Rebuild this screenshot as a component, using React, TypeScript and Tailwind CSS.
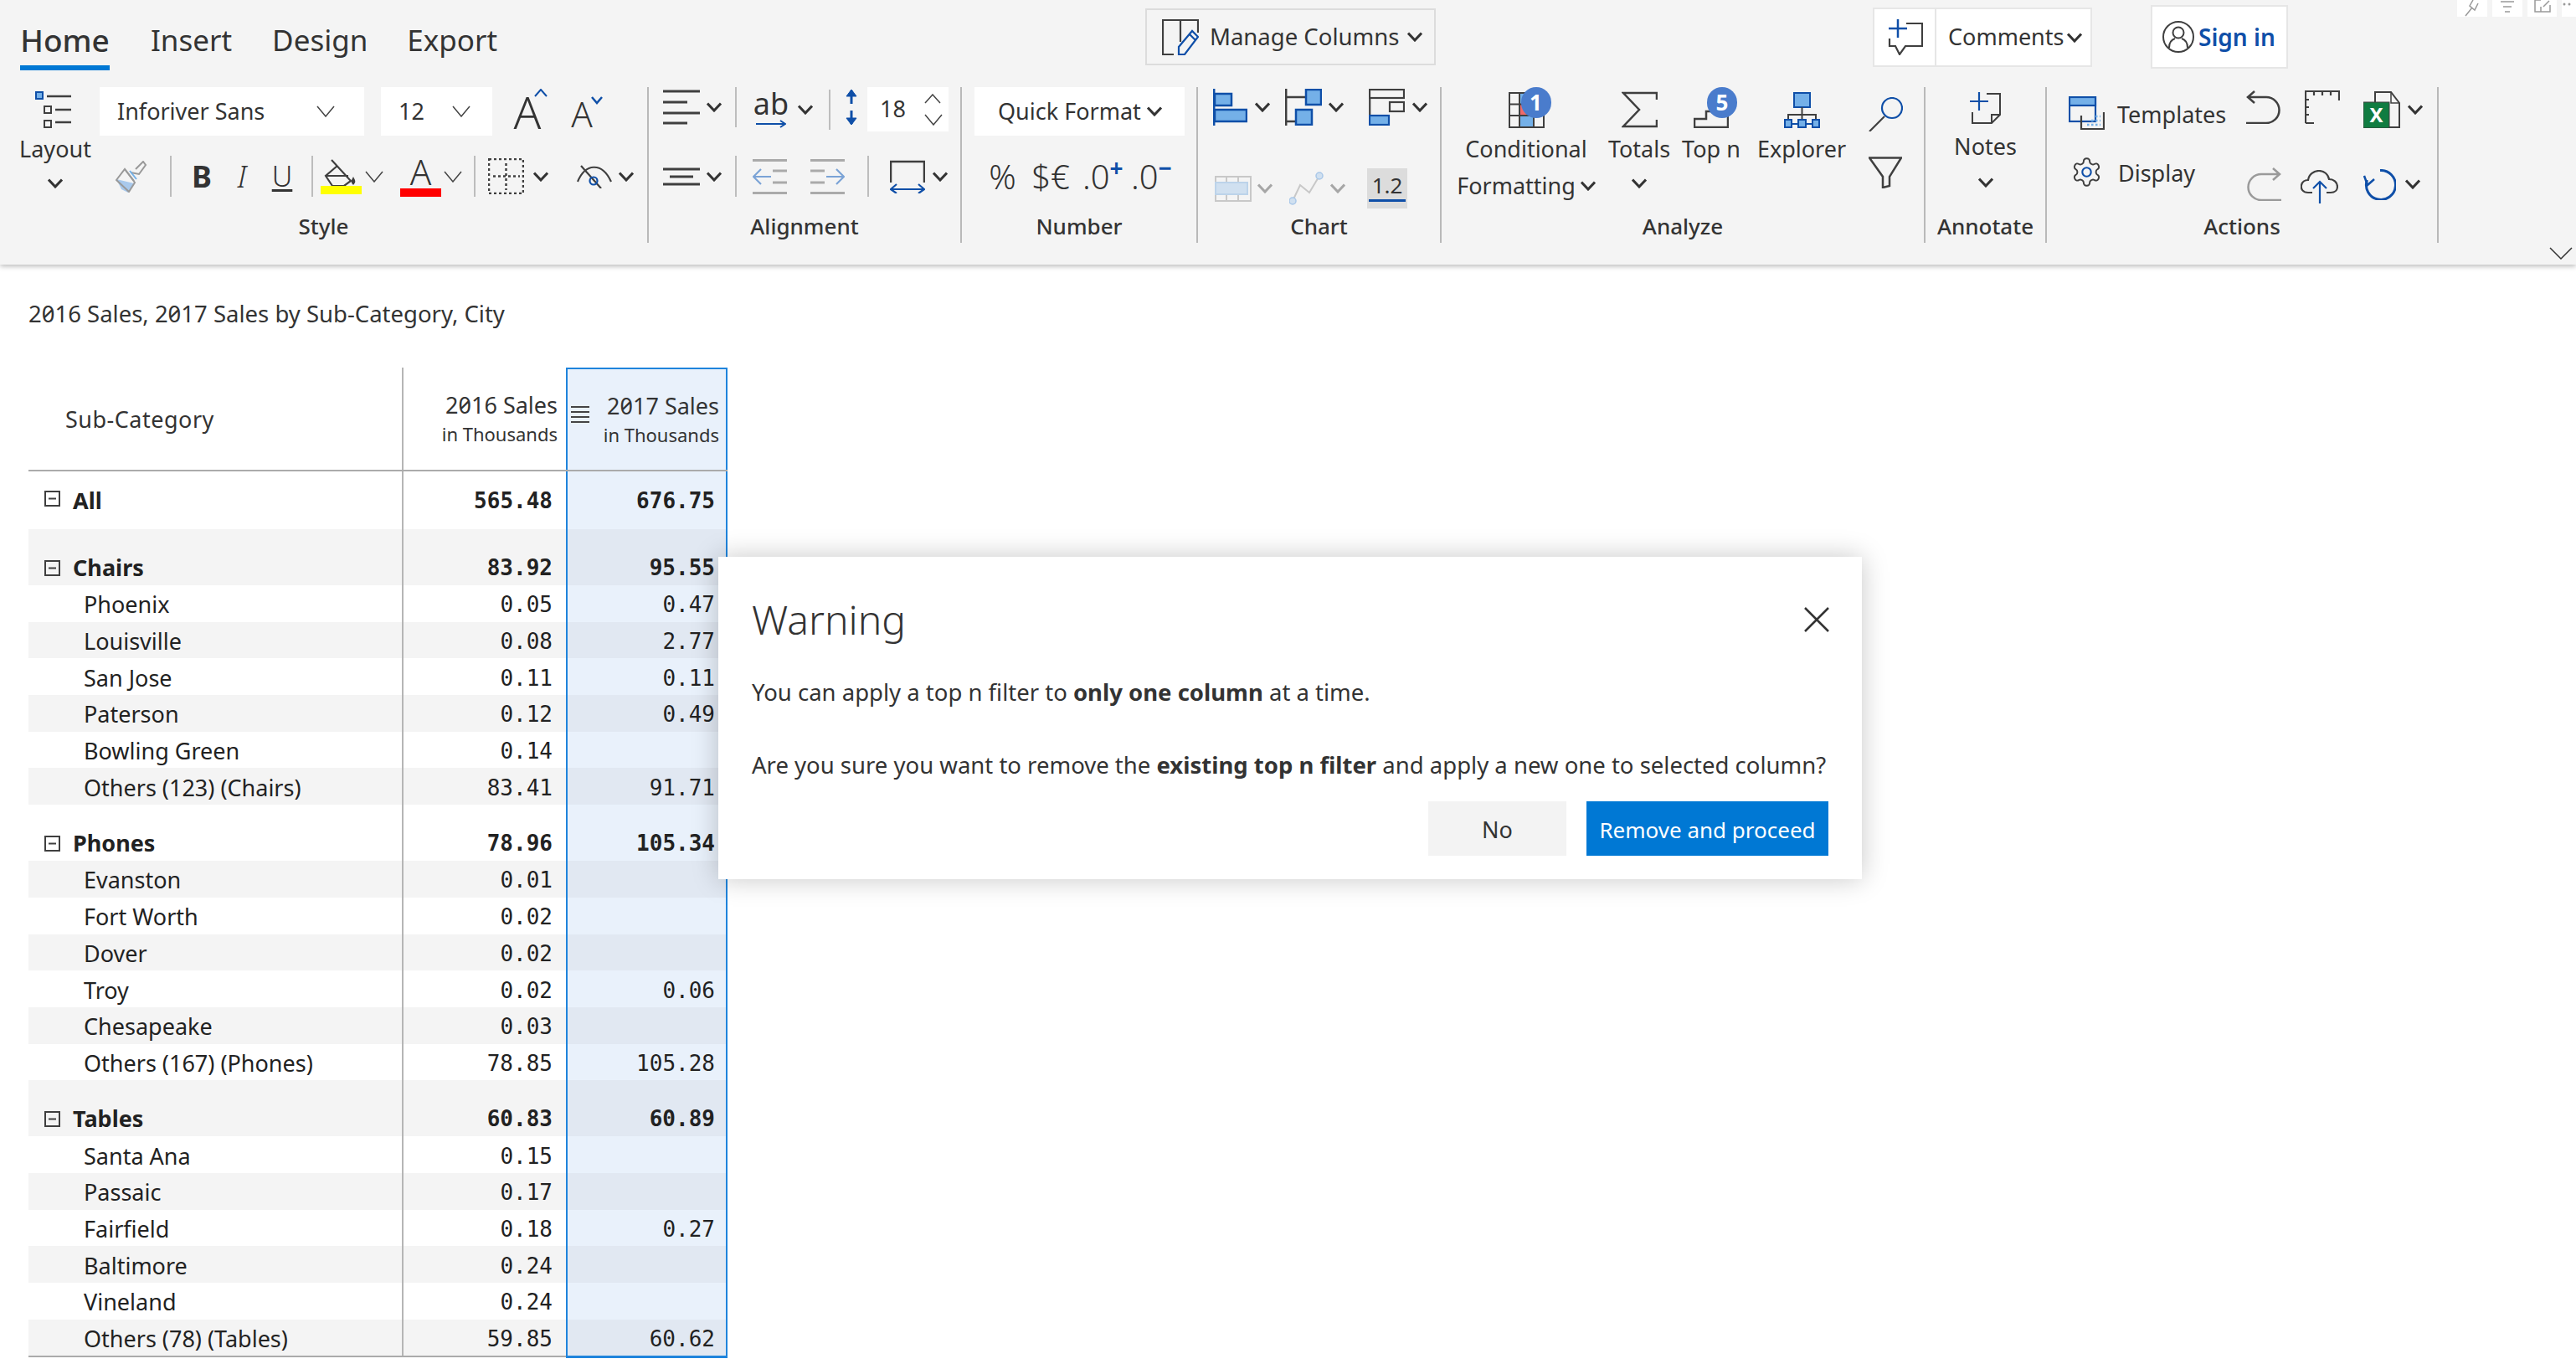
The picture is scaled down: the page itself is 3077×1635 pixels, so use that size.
import React from 'react';

const D = '#3f3f3f';
const B = '#0f4fa8';
const L = '#74b0e8';

function ChevBold({ className = '' }: { className?: string }) {
  return (
    <svg width="18" height="12" viewBox="0 0 18 12" className={`shrink-0 ${className}`} fill="none" stroke="#333" strokeWidth="3">
      <path d="M1 1.5 L9 10 L17 1.5" />
    </svg>
  );
}

function ChevThin({ className = '' }: { className?: string }) {
  return (
    <svg width="22" height="14" viewBox="0 0 22 14" className={`shrink-0 ${className}`} fill="none" stroke="#444" strokeWidth="1.5">
      <path d="M1 1 L11 13 L21 1" />
    </svg>
  );
}

function Divider({ className = '' }: { className?: string }) {
  return <div className={`w-[2px] h-[49px] bg-[#bdbdbd] shrink-0 ${className}`} />;
}

function LayoutIcon() {
  return (
    <svg width="44" height="44" viewBox="0 0 44 44" fill="none">
      <rect x="1" y="1" width="8" height="8" fill={L} stroke={B} strokeWidth="2" />
      <path d="M14 6 H43 M24 22 H43 M24 37 H43" stroke={D} strokeWidth="2.5" />
      <rect x="11" y="18" width="8" height="8" stroke={D} strokeWidth="2" />
      <rect x="11" y="35" width="8" height="8" stroke={D} strokeWidth="2" />
    </svg>
  );
}

function BrushIcon() {
  return (
    <svg width="39" height="38" viewBox="0 0 39 38" fill="none" className="shrink-0">
      <path d="M1 22 L7 34 L15 38 L22 27 Z" fill="#a9c9ec" />
      <path d="M1 23 L16 37 L23 26 L11 10 Z" stroke="#999" strokeWidth="2" />
      <path d="M11 10 L22 24 M18 14 L28 16 L36 5 L33 1 L24 10" stroke="#999" strokeWidth="2" />
      <path d="M17 12 L25 22" stroke={L} strokeWidth="2" />
    </svg>
  );
}

function FillIcon() {
  return (
    <svg width="49" height="42" viewBox="0 0 49 42" fill="none" className="shrink-0">
      <path d="M13 1 L36 26 L28 32 H14 L6 20 L20 8" stroke={D} strokeWidth="2.2" />
      <path d="M6 20 H33" stroke={D} strokeWidth="2" />
      <path d="M39 21 C37 25 35 27 39 31 C43 27 41 25 39 21 Z" fill={D} />
      <rect x="0" y="32" width="49" height="10" fill="#ffff00" />
    </svg>
  );
}

function DashGridIcon() {
  return (
    <svg width="43" height="43" viewBox="0 0 43 43" fill="none" stroke={D} strokeWidth="2.5" strokeDasharray="3 3" className="shrink-0">
      <rect x="1" y="1" width="41" height="41" />
      <path d="M21.5 6 V38 M6 21.5 H38" />
    </svg>
  );
}

function EyeIcon() {
  return (
    <svg width="42" height="28" viewBox="0 0 42 28" fill="none" className="shrink-0">
      <path d="M1 20 C10 -2 30 -4 41 20" stroke={D} strokeWidth="2.2" />
      <path d="M5 1 L29 28" stroke={D} strokeWidth="2.2" />
      <circle cx="20" cy="19" r="4.5" stroke={B} strokeWidth="2.2" />
    </svg>
  );
}

function AlignIcon() {
  return (
    <svg width="44" height="42" viewBox="0 0 44 42" stroke={D} strokeWidth="3" className="shrink-0 mb-[5px]">
      <path d="M0 2 H44 M0 15 H29 M0 28 H44 M0 40 H29" />
    </svg>
  );
}

function CenterLinesIcon() {
  return (
    <svg width="44" height="22" viewBox="0 0 44 22" stroke={D} strokeWidth="3" className="shrink-0">
      <path d="M0 2 H44 M8 11 H36 M0 20 H44" />
    </svg>
  );
}

function IndentIcon({ flip = false }: { flip?: boolean }) {
  return (
    <svg width="41" height="42" viewBox="0 0 41 42" fill="none" className="shrink-0">
      <g transform={flip ? 'translate(41 0) scale(-1 1)' : undefined}>
        <path d="M0 1.5 H41 M0 40.5 H41 M24 14 H41 M24 28 H41" stroke="#aaa" strokeWidth="3" />
        <path d="M1 21 H22 M10 12 L1 21 L10 30" stroke="#7ba3d6" strokeWidth="2.2" />
      </g>
    </svg>
  );
}

function BoxWidthIcon() {
  return (
    <svg width="42" height="40" viewBox="0 0 42 40" fill="none" className="shrink-0">
      <path d="M1 27 V2 H41 V27" stroke={D} strokeWidth="2.5" />
      <path d="M1 35 H41 M8 29 L1 35 L8 40 M34 29 L41 35 L34 40" stroke={B} strokeWidth="2.2" />
    </svg>
  );
}

function UpDownIcon() {
  return (
    <svg width="16" height="44" viewBox="0 0 16 44" fill="none" stroke={B} className="shrink-0 mb-[5px]">
      <path d="M8 2 V18 M8 26 V42" strokeWidth="3" />
      <path d="M2 9 L8 1 L14 9 Z M2 35 L8 43 L14 35 Z" fill={B} strokeWidth="1" />
    </svg>
  );
}

function BarIcon() {
  return (
    <svg width="41" height="44" viewBox="0 0 41 44" className="shrink-0" fill={L} stroke={B} strokeWidth="2.5">
      <path d="M1.2 0 V44" />
      <rect x="2" y="6" width="20" height="14" />
      <rect x="2" y="25" width="38" height="14" />
    </svg>
  );
}

function Bar2Icon() {
  return (
    <svg width="44" height="44" viewBox="0 0 44 44" className="shrink-0" fill="none">
      <path d="M1.2 0 V44 M1 10 H25 M1 39 H13" stroke={D} strokeWidth="2.5" />
      <rect x="25" y="1" width="18" height="18" fill={L} stroke={B} strokeWidth="2.5" />
      <rect x="13" y="25" width="19" height="18" fill={L} stroke={B} strokeWidth="2.5" />
    </svg>
  );
}

function Bar3Icon() {
  return (
    <svg width="43" height="44" viewBox="0 0 43 44" className="shrink-0" fill="none">
      <rect x="1" y="1" width="41" height="10" stroke={D} strokeWidth="2.2" />
      <rect x="25" y="16" width="17" height="11" stroke={D} strokeWidth="2.2" />
      <path d="M1.2 11 V32" stroke={D} strokeWidth="2.2" />
      <rect x="1" y="32" width="23" height="11" fill={L} stroke={B} strokeWidth="2.2" />
    </svg>
  );
}

function DisabledTableIcon() {
  return (
    <svg width="44" height="31" viewBox="0 0 44 31" className="shrink-0" fill="none" stroke="#c8c8c8" strokeWidth="2">
      <rect x="1" y="1" width="42" height="29" />
      <path d="M14 1 V8 M28 1 V8 M14 22 V30 M28 22 V30" />
      <rect x="1" y="8" width="38" height="14" fill="#d0e0f0" stroke="#bcd3ea" />
    </svg>
  );
}

function DisabledLineIcon() {
  return (
    <svg width="41" height="40" viewBox="0 0 41 40" className="shrink-0" fill="none">
      <path d="M4 35 L13 16 L24 25 L36 5" stroke="#c8c8c8" strokeWidth="2" />
      <circle cx="4" cy="35" r="4" fill="#d0e0f0" stroke="#a9c7e8" strokeWidth="1.5" />
      <circle cx="36" cy="5" r="4" fill="#d0e0f0" stroke="#a9c7e8" strokeWidth="1.5" />
    </svg>
  );
}

function CondIcon() {
  return (
    <svg width="43" height="43" viewBox="0 0 43 43" fill="none">
      <rect x="13" y="1" width="17" height="13" fill={L} />
      <rect x="13" y="15" width="17" height="13" fill="#ef6a6a" />
      <rect x="13" y="28" width="17" height="14" fill={L} stroke={B} strokeWidth="2" />
      <path d="M1 1 H42 V42 H1 Z M13 1 V42 M30 1 V42 M1 14.5 H42 M1 28 H42" stroke={D} strokeWidth="2" />
    </svg>
  );
}

function SigmaIcon() {
  return (
    <svg width="43" height="44" viewBox="0 0 43 44" fill="none" stroke={D} strokeWidth="2.5">
      <path d="M42 10 V2 H2 L21 22 L2 42 H42 V34" />
    </svg>
  );
}

function StairsIcon() {
  return (
    <svg width="42" height="43" viewBox="0 0 42 43" fill="none" stroke={D} strokeWidth="2.5">
      <path d="M1 42 V32 H15 V23 H41 V42 Z" />
    </svg>
  );
}

function ExplorerIcon() {
  return (
    <svg width="43" height="43" viewBox="0 0 43 43" fill="none">
      <rect x="12" y="1" width="19" height="17" fill={L} stroke={B} strokeWidth="2" />
      <path d="M21.5 18 V34 M5 34 V27 H38 V34" stroke={D} strokeWidth="2" />
      <path d="M9 38 H17 M26 38 H34" stroke={B} strokeWidth="2" />
      <rect x="1" y="33" width="8" height="9" fill={L} stroke={B} strokeWidth="2" />
      <rect x="17" y="33" width="9" height="9" fill={L} stroke={B} strokeWidth="2" />
      <rect x="34" y="33" width="8" height="9" fill={L} stroke={B} strokeWidth="2" />
    </svg>
  );
}

function SearchIcon() {
  return (
    <svg width="41" height="41" viewBox="0 0 41 41" fill="none">
      <circle cx="28" cy="13" r="12" stroke={B} strokeWidth="2.2" />
      <path d="M19 23 L1 41" stroke={D} strokeWidth="2.2" />
    </svg>
  );
}

function FunnelIcon() {
  return (
    <svg width="40" height="38" viewBox="0 0 40 38" fill="none" stroke={D} strokeWidth="2.5">
      <path d="M1 1.5 H39 L25 24 V35 L17 37 V24 Z" />
    </svg>
  );
}

function NoteIcon() {
  return (
    <svg width="37" height="39" viewBox="0 0 37 39" fill="none">
      <path d="M20 3 H36 V28 L26 38 H3 V25 M36 28 H26 V38" stroke={D} strokeWidth="2" />
      <path d="M11 1 V23 M0 12 H22" stroke={B} strokeWidth="2.2" />
    </svg>
  );
}

function CommentIcon() {
  return (
    <svg width="42" height="43" viewBox="0 0 42 43" fill="none" className="shrink-0">
      <path d="M22 5 H41 V32 H21 L14 42 L9 32 H2 V23" stroke={D} strokeWidth="2.2" />
      <path d="M12 0 V22 M1 11 H23" stroke={B} strokeWidth="2.5" />
    </svg>
  );
}

function ManageIcon() {
  return (
    <svg width="44" height="43" viewBox="0 0 44 43" fill="none" className="shrink-0">
      <path d="M14 42 H1 V1 H43 V16 M22 1 V27" stroke={D} strokeWidth="2.2" />
      <path d="M20 42 V33 L36 14 L43 21 L27 42 Z M33 18 L40 25" stroke={B} strokeWidth="2.2" fill="#f4f4f4" />
    </svg>
  );
}

function UserIcon() {
  return (
    <svg width="38" height="38" viewBox="0 0 38 38" fill="none" stroke={D} strokeWidth="2" className="shrink-0">
      <circle cx="19" cy="19" r="18" />
      <circle cx="19" cy="14" r="6.5" />
      <path d="M8 32 C8 25 12 22 15 21 M30 32 C30 25 26 22 23 21" />
    </svg>
  );
}

function TemplatesIcon() {
  return (
    <svg width="43" height="40" viewBox="0 0 43 40" fill="none" className="shrink-0">
      <rect x="1" y="1" width="31" height="29" stroke={B} strokeWidth="2.2" />
      <rect x="1" y="1" width="31" height="10" fill={L} stroke={B} strokeWidth="2.2" />
      <path d="M15 23 V39 H42 V19" stroke={D} strokeWidth="2.2" />
      <path d="M22 34 H38 M27 29 H38 M32 24 H38" stroke={L} strokeWidth="2.5" strokeDasharray="2.5 2.5" />
    </svg>
  );
}

function GearIcon() {
  return (
    <svg width="39" height="39" viewBox="0 0 24 24" fill="none" className="shrink-0">
      <path
        d="M12.22 2h-.44a2 2 0 0 0-2 2v.18a2 2 0 0 1-1 1.73l-.43.25a2 2 0 0 1-2 0l-.15-.08a2 2 0 0 0-2.73.73l-.22.38a2 2 0 0 0 .73 2.73l.15.1a2 2 0 0 1 1 1.72v.51a2 2 0 0 1-1 1.74l-.15.09a2 2 0 0 0-.73 2.73l.22.38a2 2 0 0 0 2.73.73l.15-.08a2 2 0 0 1 2 0l.43.25a2 2 0 0 1 1 1.73V20a2 2 0 0 0 2 2h.44a2 2 0 0 0 2-2v-.18a2 2 0 0 1 1-1.73l.43-.25a2 2 0 0 1 2 0l.15.08a2 2 0 0 0 2.73-.73l.22-.39a2 2 0 0 0-.73-2.73l-.15-.08a2 2 0 0 1-1-1.74v-.5a2 2 0 0 1 1-1.74l.15-.09a2 2 0 0 0 .73-2.73l-.22-.38a2 2 0 0 0-2.73-.73l-.15.08a2 2 0 0 1-2 0l-.43-.25a2 2 0 0 1-1-1.73V4a2 2 0 0 0-2-2z"
        stroke={D}
        strokeWidth="1.2"
      />
      <circle cx="12" cy="12" r="3.2" stroke={B} strokeWidth="1.3" />
    </svg>
  );
}

function UndoIcon() {
  return (
    <svg width="42" height="40" viewBox="0 0 42 40" fill="none" stroke={D} strokeWidth="2.5" className="shrink-0">
      <path d="M3 8 H24 A15.5 15.5 0 0 1 24 39 H0 M10 1 L2 8 L10 15" />
    </svg>
  );
}

function RedoIcon() {
  return (
    <svg width="41" height="40" viewBox="0 0 41 40" fill="none" stroke="#9a9a9a" strokeWidth="2.5" className="shrink-0">
      <path d="M38 8 H17 A15.5 15.5 0 0 0 17 39 H41 M31 1 L39 8 L31 15" />
    </svg>
  );
}

function RulerIcon() {
  return (
    <svg width="42" height="40" viewBox="0 0 42 40" fill="none" stroke={D} strokeWidth="2.2" className="shrink-0">
      <path d="M1 39 V1 H41 V12 M1 39 H11 M11 1 V6 M21 1 V6 M31 1 V6 M1 11 H5 M1 20 H5 M1 29 H5" />
    </svg>
  );
}

function ExcelIcon() {
  return (
    <svg width="44" height="44" viewBox="0 0 44 44" className="shrink-0">
      <path d="M14 13 V1 H33 L43 14 V43 H30" fill="#f4f4f4" stroke={D} strokeWidth="2" />
      <path d="M33 1 V14 H43" fill="none" stroke={D} strokeWidth="1.5" />
      <rect x="0" y="13" width="31" height="31" fill="#107c41" stroke={D} strokeWidth="1" />
      <text x="15.5" y="37" textAnchor="middle" fontSize="24" fontWeight="700" fill="#fff" fontFamily="Noto Sans">X</text>
    </svg>
  );
}

function CloudIcon() {
  return (
    <svg width="45" height="40" viewBox="0 0 45 40" fill="none" className="shrink-0">
      <path d="M14 27 H9 C3 27 0 23 1 18 C2 14 5 12 9 12 C10 5 16 1 22 1 C28 1 33 5 34 11 C40 11 44 15 44 20 C44 24 41 27 36 27 H31" stroke={D} strokeWidth="2.2" />
      <path d="M23 40 V14 M15 22 L23 14 L31 22" stroke={B} strokeWidth="2.2" />
    </svg>
  );
}

function RefreshIcon() {
  return (
    <svg width="39" height="37" viewBox="0 0 39 37" fill="none" stroke={B} strokeWidth="3" className="shrink-0">
      <path d="M20 1.5 A17.5 17.5 0 1 1 4.5 13" />
      <path d="M1 8 L5 19 L13 12" strokeWidth="2.5" />
    </svg>
  );
}

function Group({ label, width, children }: { label: string; width: string; children: React.ReactNode }) {
  return (
    <div className={`${width} h-[186px] shrink-0 flex flex-col border-r-2 border-[#b9b9b9]`}>
      <div className="h-[148px]">{children}</div>
      <div className="h-[38px] text-center text-[26px] leading-[36px] font-medium text-[#333]">{label}</div>
    </div>
  );
}

function HostIcons() {
  return (
    <div className="absolute right-0 top-0 flex gap-[6px]">
      <div className="w-[36px] h-[20px] bg-white flex justify-center">
        <svg width="20" height="20" viewBox="0 0 20 20" fill="none" stroke="#999" strokeWidth="1.5">
          <path d="M11 0 L7 7 L13 12 L17 4 M10 9 L2 19" />
        </svg>
      </div>
      <div className="w-[36px] h-[20px] bg-white flex justify-center">
        <svg width="16" height="20" viewBox="0 0 16 20" stroke="#999" strokeWidth="1.5">
          <path d="M0 2 H16 M3 8 H13 M5 14 H11" />
        </svg>
      </div>
      <div className="w-[35px] h-[20px] bg-white flex justify-center">
        <svg width="20" height="20" viewBox="0 0 20 20" fill="none" stroke="#999" strokeWidth="1.5">
          <path d="M8 0 H1 V14 H19 V6 M8 8 V14 M11 8 L18 1" />
        </svg>
      </div>
      <div className="w-[17px] h-[20px] bg-white flex">
        <svg width="12" height="20" viewBox="0 0 12 20" fill="#999">
          <circle cx="3" cy="5" r="1.5" />
          <circle cx="9" cy="5" r="1.5" />
        </svg>
      </div>
    </div>
  );
}

function Ribbon() {
  return (
    <div className="relative h-[316px] bg-[#f4f4f4] shadow-[0_2px_6px_rgba(0,0,0,0.28)] text-[#333] text-[27px]">
      <div className="h-[104px] flex items-start">
        <div className="w-[1368px] shrink-0 flex items-start pt-[18px] pl-[24px] text-[35px] leading-[60px]">
          <div className="w-[107px] h-[66px] border-b-[6px] border-[#0078d4] text-[37px] font-medium text-center">Home</div>
          <div className="ml-[49px]">Insert</div>
          <div className="ml-[48px]">Design</div>
          <div className="ml-[47px]">Export</div>
        </div>
        <div className="mt-[10px] w-[347px] h-[68px] border-2 border-[#dcdcdc] flex items-center pl-[18px]">
          <ManageIcon />
          <span className="ml-[13px] whitespace-nowrap w-[228px] text-[27.5px]">Manage Columns</span>
          <ChevBold className="ml-[8px]" />
        </div>
        <div className="ml-[522px] mt-[9px] w-[262px] h-[71px] bg-white border-2 border-[#e6e6e6] flex items-center">
          <div className="w-[74px] h-full border-r-2 border-[#e6e6e6] flex items-center pl-[16px]"><CommentIcon /></div>
          <span className="ml-[14px] w-[140px] whitespace-nowrap">Comments</span>
          <ChevBold className="ml-[2px]" />
        </div>
        <div className="ml-[70px] mt-[6px] w-[164px] h-[76px] bg-white border-2 border-[#e6e6e6] flex items-center pl-[12px]">
          <UserIcon />
          <span className="ml-[5px] text-[#0f4fa8] font-semibold text-[28px] whitespace-nowrap">Sign in</span>
        </div>
      </div>

      <div className="flex items-start">
        <Group label="Style" width="w-[775px]">
          <div className="flex">
            <div className="w-[132px] -mr-[14px] shrink-0 flex flex-col items-center">
              <div className="mt-[5px] -ml-[4px]"><LayoutIcon /></div>
              <div className="mt-[3px] leading-[44px]">Layout</div>
              <ChevBold className="mt-[13px]" />
            </div>
            <div className="flex flex-col">
              <div className="h-[58px] flex">
                <div className="ml-[1px] w-[316px] bg-white flex items-center pl-[21px]">
                  <span className="w-[238px] whitespace-nowrap">Inforiver Sans</span>
                  <ChevThin />
                </div>
                <div className="ml-[20px] w-[133px] bg-white flex items-center pl-[21px]">
                  <span className="w-[64px]">12</span>
                  <ChevThin />
                </div>
                <div className="relative ml-[24px] w-[36px] text-[54px] leading-[58px] font-light text-center">
                  A
                  <svg width="16" height="10" viewBox="0 0 16 10" fill="none" stroke={B} strokeWidth="2" className="absolute left-[26px] top-[2px]"><path d="M1 9 L8 1 L15 9" /></svg>
                </div>
                <div className="relative ml-[33px] w-[28px] text-[42px] leading-[64px] font-light text-center">
                  A
                  <svg width="14" height="10" viewBox="0 0 14 10" fill="none" stroke={B} strokeWidth="2.5" className="absolute left-[25px] top-[11px]"><path d="M1 1 L7 8 L13 1" /></svg>
                </div>
              </div>
              <div className="mt-[24px] h-[49px] flex items-center">
                <div className="ml-[20px]"><BrushIcon /></div>
                <Divider className="ml-[26px]" />
                <span className="ml-[20px] w-[32px] text-center text-[36px] font-bold">B</span>
                <span className="ml-[16px] w-[32px] text-center text-[36px] font-light italic">I</span>
                <span className="ml-[16px] w-[32px] text-center text-[34px] underline underline-offset-[3px] font-light">U</span>
                <Divider className="ml-[19px]" />
                <div className="ml-[9px]"><FillIcon /></div>
                <ChevThin className="ml-[4px]" />
                <div className="ml-[20px] w-[49px] h-[49px] flex flex-col items-center justify-end">
                  <span className="text-[42px] leading-[40px] font-light">A</span>
                  <div className="w-[49px] h-[10px] bg-[#ff0000] shrink-0" />
                </div>
                <ChevThin className="ml-[3px]" />
                <Divider className="ml-[14px]" />
                <div className="ml-[15px]"><DashGridIcon /></div>
                <ChevBold className="ml-[11px]" />
                <div className="ml-[34px]"><EyeIcon /></div>
                <ChevBold className="ml-[8px]" />
              </div>
            </div>
          </div>
        </Group>

        <Group label="Alignment" width="w-[374px]">
          <div className="h-[53px] flex items-center">
            <div className="ml-[17px]"><AlignIcon /></div>
            <ChevBold className="ml-[8px] mb-[5px]" />
            <div className="ml-[16px] w-[2px] h-[48px] bg-[#bdbdbd] mb-[5px]" />
            <div className="ml-[23px] w-[36px] flex flex-col items-center mb-[3px]">
              <span className="text-[36px] leading-[38px]">ab</span>
              <svg width="36" height="10" viewBox="0 0 36 10" fill="none" stroke={B} strokeWidth="2"><path d="M0 5 H34 M29 1 L35 5 L29 9" /></svg>
            </div>
            <ChevBold className="ml-[14px]" />
            <div className="ml-[19px] w-[2px] h-[48px] bg-[#bdbdbd]" />
            <div className="ml-[17px]"><UpDownIcon /></div>
            <div className="ml-[11px] w-[97px] h-[53px] bg-white flex items-center pl-[15px]">
              <span className="w-[53px]">18</span>
              <div className="flex flex-col gap-[12px]">
                <svg width="20" height="12" viewBox="0 0 20 12" fill="none" stroke="#444" strokeWidth="1.5"><path d="M1 11 L10 1 L19 11" /></svg>
                <ChevThin />
              </div>
            </div>
          </div>
          <div className="mt-[29px] h-[49px] flex items-center">
            <div className="ml-[17px]"><CenterLinesIcon /></div>
            <ChevBold className="ml-[8px]" />
            <Divider className="ml-[16px]" />
            <div className="ml-[19px]"><IndentIcon /></div>
            <div className="ml-[28px]"><IndentIcon flip /></div>
            <Divider className="ml-[27px]" />
            <div className="ml-[25px]"><BoxWidthIcon /></div>
            <ChevBold className="ml-[9px]" />
          </div>
        </Group>

        <Group label="Number" width="w-[282px]">
          <div className="h-[58px] ml-[15px] w-[251px] bg-white flex items-center pl-[28px]">
            <span className="w-[172px] whitespace-nowrap">Quick Format</span>
            <ChevBold className="ml-[6px]" />
          </div>
          <div className="mt-[24px] h-[49px] flex items-center text-[40px] font-light">
            <span className="ml-[30px] w-[37px] text-center">%</span>
            <span className="ml-[16px] w-[46px] text-center whitespace-nowrap">$€</span>
            <span className="ml-[15px] w-[44px] whitespace-nowrap">.0<span className="relative top-[-15px] text-[28px] font-bold text-[#0f4fa8]">+</span></span>
            <span className="ml-[14px] w-[43px] whitespace-nowrap">.0<span className="relative top-[-15px] text-[28px] font-bold text-[#0f4fa8]">−</span></span>
          </div>
        </Group>

        <Group label="Chart" width="w-[291px]">
          <div className="h-[48px] flex items-center">
            <div className="ml-[18px]"><BarIcon /></div>
            <ChevBold className="ml-[9px]" />
            <div className="ml-[18px]"><Bar2Icon /></div>
            <ChevBold className="ml-[8px]" />
            <div className="ml-[30px]"><Bar3Icon /></div>
            <ChevBold className="ml-[9px]" />
          </div>
          <div className="mt-[49px] h-[48px] flex items-center">
            <div className="ml-[20px]"><DisabledTableIcon /></div>
            <ChevBold className="ml-[7px] opacity-40" />
            <div className="ml-[20px]"><DisabledLineIcon /></div>
            <ChevBold className="ml-[8px] opacity-40" />
            <div className="ml-[26px] w-[48px] h-[48px] bg-[#dcdcdc] flex flex-col items-center justify-end">
              <span className="text-[26px] leading-[30px]">1.2</span>
              <div className="w-[44px] h-[3px] bg-[#0f4fa8] mt-[2px] mb-[8px]" />
            </div>
          </div>
        </Group>

        <Group label="Analyze" width="w-[578px]">
          <div className="flex">
            <div className="ml-[16px] w-[170px] flex flex-col items-center">
              <div className="relative mt-[6px] w-[43px] h-[43px]">
                <CondIcon />
                <div className="absolute left-[15px] top-[-6px] w-[36px] h-[37px] rounded-full bg-[#4a7ccc] text-white font-bold text-[26px] leading-[37px] text-center">1</div>
              </div>
              <div className="mt-[3px] leading-[44px]">Conditional</div>
              <div className="leading-[44px] flex items-center whitespace-nowrap">Formatting<ChevBold className="ml-[6px]" /></div>
            </div>
            <div className="ml-[13px] w-[74px] flex flex-col items-center">
              <div className="mt-[5px] h-[44px]"><SigmaIcon /></div>
              <div className="mt-[3px] leading-[44px]">Totals</div>
              <ChevBold className="mt-[13px]" />
            </div>
            <div className="ml-[14px] w-[70px] flex flex-col items-center">
              <div className="relative mt-[6px] w-[42px] h-[43px]">
                <StairsIcon />
                <div className="absolute left-[16px] top-[-6px] w-[36px] h-[37px] rounded-full bg-[#4a7ccc] text-white font-bold text-[26px] leading-[37px] text-center">5</div>
              </div>
              <div className="mt-[3px] leading-[44px] whitespace-nowrap">Top n</div>
            </div>
            <div className="ml-[21px] w-[104px] flex flex-col items-center">
              <div className="mt-[6px] h-[43px]"><ExplorerIcon /></div>
              <div className="mt-[3px] leading-[44px]">Explorer</div>
            </div>
            <div className="ml-[28px] w-[41px] flex flex-col">
              <div className="mt-[12px] h-[41px]"><SearchIcon /></div>
              <div className="mt-[30px]"><FunnelIcon /></div>
            </div>
          </div>
        </Group>

        <Group label="Annotate" width="w-[145px]">
          <div className="flex flex-col items-center">
            <div className="mt-[5px] h-[39px]"><NoteIcon /></div>
            <div className="mt-[5px] leading-[44px]">Notes</div>
            <ChevBold className="mt-[15px]" />
          </div>
        </Group>

        <Group label="Actions" width="w-[468px]">
          <div className="h-[82px] flex items-start">
            <div className="ml-[26px] mt-[11px]"><TemplatesIcon /></div>
            <div className="ml-[15px] mt-[11px] w-[129px] leading-[44px] whitespace-nowrap">Templates</div>
            <div className="ml-[25px] mt-[4px]"><UndoIcon /></div>
            <div className="ml-[28px] mt-[4px]"><RulerIcon /></div>
            <div className="ml-[28px] mt-[5px]"><ExcelIcon /></div>
            <ChevBold className="ml-[9px] mt-[21px]" />
          </div>
          <div className="flex items-start">
            <div className="ml-[28px]"><GearIcon /></div>
            <div className="ml-[18px] -mt-[1px] w-[154px] leading-[44px]">Display</div>
            <div className="mt-[14px]"><RedoIcon /></div>
            <div className="ml-[23px] mt-[17px]"><CloudIcon /></div>
            <div className="ml-[30px] mt-[16px]"><RefreshIcon /></div>
            <ChevBold className="ml-[11px] mt-[28px]" />
          </div>
        </Group>
      </div>

      <svg width="28" height="15" viewBox="0 0 28 15" fill="none" stroke="#333" strokeWidth="1.5" className="absolute right-[4px] top-[295px]">
        <path d="M1 1 L14 14 L27 1" />
      </svg>
      <HostIcons />
    </div>
  );
}

type Row = { label: string; a: string; b: string; group?: boolean; gray: boolean; first?: boolean };

const rows: Row[] = [
  { label: 'All', a: '565.48', b: '676.75', group: true, first: true, gray: false },
  { label: 'Chairs', a: '83.92', b: '95.55', group: true, gray: true },
  { label: 'Phoenix', a: '0.05', b: '0.47', gray: false },
  { label: 'Louisville', a: '0.08', b: '2.77', gray: true },
  { label: 'San Jose', a: '0.11', b: '0.11', gray: false },
  { label: 'Paterson', a: '0.12', b: '0.49', gray: true },
  { label: 'Bowling Green', a: '0.14', b: '', gray: false },
  { label: 'Others (123) (Chairs)', a: '83.41', b: '91.71', gray: true },
  { label: 'Phones', a: '78.96', b: '105.34', group: true, gray: false },
  { label: 'Evanston', a: '0.01', b: '', gray: true },
  { label: 'Fort Worth', a: '0.02', b: '', gray: false },
  { label: 'Dover', a: '0.02', b: '', gray: true },
  { label: 'Troy', a: '0.02', b: '0.06', gray: false },
  { label: 'Chesapeake', a: '0.03', b: '', gray: true },
  { label: 'Others (167) (Phones)', a: '78.85', b: '105.28', gray: false },
  { label: 'Tables', a: '60.83', b: '60.89', group: true, gray: true },
  { label: 'Santa Ana', a: '0.15', b: '', gray: false },
  { label: 'Passaic', a: '0.17', b: '', gray: true },
  { label: 'Fairfield', a: '0.18', b: '0.27', gray: false },
  { label: 'Baltimore', a: '0.24', b: '', gray: true },
  { label: 'Vineland', a: '0.24', b: '', gray: false },
  { label: 'Others (78) (Tables)', a: '59.85', b: '60.62', gray: true },
];

function Collapse() {
  return (
    <svg width="19" height="19" viewBox="0 0 19 19" fill="none" stroke={D} strokeWidth="2" className="shrink-0">
      <rect x="1" y="1" width="17" height="17" />
      <path d="M5 9.5 H14" />
    </svg>
  );
}

function TableRow({ row }: { row: Row }) {
  const height = row.first ? 'h-[69px] items-center' : row.group ? 'h-[67px] items-end pb-[2px]' : 'h-[43.7px] items-center pt-[3px]';
  const bold = row.group ? 'font-bold' : '';
  return (
    <div className={`grid grid-cols-[446px_196px_193px] text-[#222] ${bold}`}>
      <div className={`flex ${height} ${row.gray ? 'bg-[#f4f4f4]' : 'bg-white'} ${row.group ? 'pl-[19px]' : 'pl-[66px]'} text-[27px] leading-[38px]`}>
        {row.group && <div className="h-[38px] flex items-center mr-[15px] -mt-[4px]"><Collapse /></div>}
        <span className="whitespace-nowrap">{row.label}</span>
      </div>
      <div className={`flex ${height} justify-end pr-[16px] border-l-2 border-[#b5b5b5] ${row.gray ? 'bg-[#f4f4f4]' : 'bg-white'} font-['DejaVu_Sans_Mono'] text-[26px] leading-[38px]`}>
        {row.a}
      </div>
      <div className={`flex ${height} justify-end pr-[13px] border-x-2 border-[#1f84dc] ${row.gray ? 'bg-[#e1e8f2]' : 'bg-[#e9f1fb]'} font-['DejaVu_Sans_Mono'] text-[26px] leading-[38px]`}>
        {row.b}
      </div>
    </div>
  );
}

function Table() {
  return (
    <div className="ml-[34px] w-[835px]">
      <div className="grid grid-cols-[446px_196px_193px] h-[124px] border-b-2 border-[#ababab] text-[#333]">
        <div className="flex items-center pl-[44px] pt-[3px] text-[27px] tracking-[0.5px]">Sub-Category</div>
        <div className="flex flex-col items-end justify-center pt-[2px] pr-[10px] border-l-2 border-[#b5b5b5]">
          <div className="text-[27px] leading-[35px] slashed-zero">2016 Sales</div>
          <div className="text-[22px] leading-[35px]">in Thousands</div>
        </div>
        <div className="relative flex flex-col items-end justify-center pt-[2px] pr-[8px] border-x-2 border-t-2 border-[#1f84dc] bg-[#e9f1fb]">
          <div className="text-[27px] leading-[35px] slashed-zero">2017 Sales</div>
          <div className="text-[22px] leading-[35px]">in Thousands</div>
          <svg width="22" height="20" viewBox="0 0 22 20" stroke="#444" strokeWidth="2" className="absolute left-[4px] top-[44px]">
            <path d="M0 1 H22 M0 7 H22 M0 13 H22 M0 19 H22" />
          </svg>
        </div>
      </div>
      {rows.map((row) => (
        <TableRow key={row.label} row={row} />
      ))}
      <div className="grid grid-cols-[642px_193px]">
        <div className="h-[2px] bg-[#ababab]" />
        <div className="h-[3px] bg-[#1f84dc]" />
      </div>
    </div>
  );
}

function WarningDialog() {
  return (
    <div className="absolute left-[858px] top-[665px] w-[1366px] h-[385px] bg-white shadow-[0_0_30px_rgba(0,0,0,0.22)] px-[40px] text-[#333]">
      <div className="flex items-center justify-between pt-[45px] h-[105px]">
        <span className="text-[48px] leading-[60px] font-light">Warning</span>
        <svg width="30" height="30" viewBox="0 0 30 30" stroke="#333" strokeWidth="2.5" className="mr-[-1px]">
          <path d="M1 1 L29 29 M29 1 L1 29" />
        </svg>
      </div>
      <p className="mt-[32px] text-[27.5px] leading-[50px] whitespace-nowrap">
        You can apply a top n filter to <b>only one column</b> at a time.
      </p>
      <p className="mt-[37px] text-[27.5px] leading-[50px] whitespace-nowrap">
        Are you sure you want to remove the <b>existing top n filter</b> and apply a new one to selected column?
      </p>
      <div className="mt-[18px] flex justify-end gap-[24px]">
        <button className="w-[165px] h-[65px] pt-[3px] bg-[#f3f3f3] text-[27px] text-[#333]">No</button>
        <button className="w-[289px] h-[65px] pt-[3px] bg-[#0078d4] text-[26px] text-white">Remove and proceed</button>
      </div>
    </div>
  );
}

export default function App() {
  return (
    <div className="relative w-[3077px] h-[1635px] bg-white overflow-hidden font-['Noto_Sans',sans-serif]">
      <Ribbon />
      <div className="h-[123px] pl-[34px] pt-[40px] text-[27.5px] leading-[38px] text-[#333] slashed-zero">
        2016 Sales, 2017 Sales by Sub-Category, City
      </div>
      <Table />
      <WarningDialog />
    </div>
  );
}
